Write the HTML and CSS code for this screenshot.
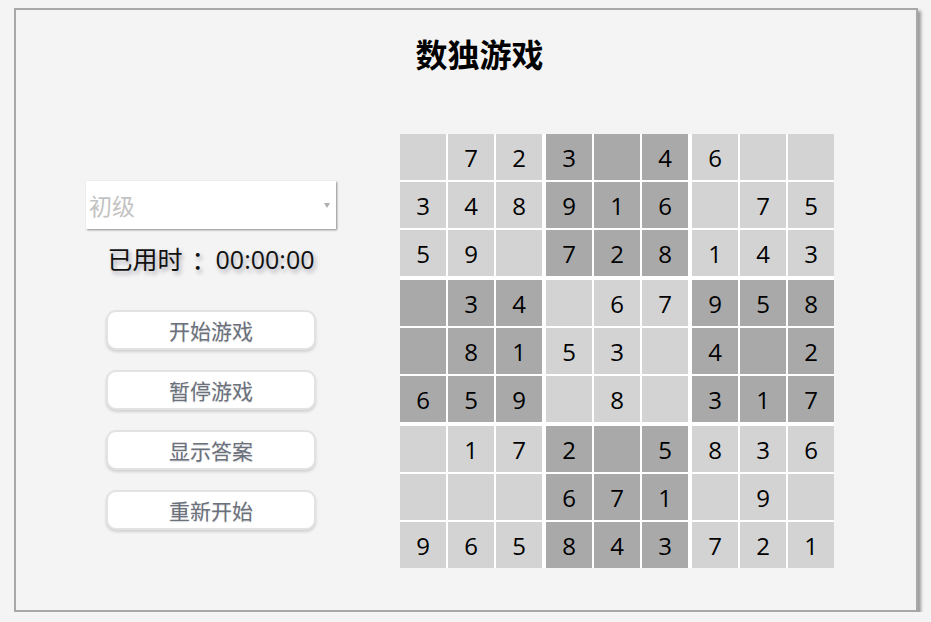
FILE: index.html
```html
<!DOCTYPE html>
<html lang="zh">
<head>
<meta charset="utf-8">
<title>数独游戏</title>
<link rel="stylesheet" href="styles.css">
</head>
<body>
<div class="frame">
  <h1 class="title">数独游戏</h1>
  <div class="main">
    <div class="panel">
      <div class="select"><span class="select-text">初级</span><span class="select-arrow"></span></div>
      <div class="timer">已用时<span class="colon">：</span>00:00:00</div>
      <button class="btn">开始游戏</button>
      <button class="btn">暂停游戏</button>
      <button class="btn">显示答案</button>
      <button class="btn">重新开始</button>
    </div>
    <div class="board">
      <div class="block light"><div class="cell"></div><div class="cell">7</div><div class="cell">2</div><div class="cell">3</div><div class="cell">4</div><div class="cell">8</div><div class="cell">5</div><div class="cell">9</div><div class="cell"></div></div>
      <div class="block dark"><div class="cell">3</div><div class="cell"></div><div class="cell">4</div><div class="cell">9</div><div class="cell">1</div><div class="cell">6</div><div class="cell">7</div><div class="cell">2</div><div class="cell">8</div></div>
      <div class="block light"><div class="cell">6</div><div class="cell"></div><div class="cell"></div><div class="cell"></div><div class="cell">7</div><div class="cell">5</div><div class="cell">1</div><div class="cell">4</div><div class="cell">3</div></div>
      <div class="block dark"><div class="cell"></div><div class="cell">3</div><div class="cell">4</div><div class="cell"></div><div class="cell">8</div><div class="cell">1</div><div class="cell">6</div><div class="cell">5</div><div class="cell">9</div></div>
      <div class="block light"><div class="cell"></div><div class="cell">6</div><div class="cell">7</div><div class="cell">5</div><div class="cell">3</div><div class="cell"></div><div class="cell"></div><div class="cell">8</div><div class="cell"></div></div>
      <div class="block dark"><div class="cell">9</div><div class="cell">5</div><div class="cell">8</div><div class="cell">4</div><div class="cell"></div><div class="cell">2</div><div class="cell">3</div><div class="cell">1</div><div class="cell">7</div></div>
      <div class="block light"><div class="cell"></div><div class="cell">1</div><div class="cell">7</div><div class="cell"></div><div class="cell"></div><div class="cell"></div><div class="cell">9</div><div class="cell">6</div><div class="cell">5</div></div>
      <div class="block dark"><div class="cell">2</div><div class="cell"></div><div class="cell">5</div><div class="cell">6</div><div class="cell">7</div><div class="cell">1</div><div class="cell">8</div><div class="cell">4</div><div class="cell">3</div></div>
      <div class="block light"><div class="cell">8</div><div class="cell">3</div><div class="cell">6</div><div class="cell"></div><div class="cell">9</div><div class="cell"></div><div class="cell">7</div><div class="cell">2</div><div class="cell">1</div></div>
    </div>
  </div>
</div>
</body>
</html>
```
FILE: styles.css
```css
html, body {
  margin: 0;
  background: #f4f4f4;
}
body {
  padding: 8px 0 0 14px;
  font-family: "Open Sans", "Noto Sans CJK SC", sans-serif;
}
.frame {
  box-sizing: border-box;
  width: 904px;
  height: 604px;
  border: 2px solid #a8a8a8;
  box-shadow: 3px 3px 3px #9a9a9a;
  background: #f4f4f4;
}
.title {
  margin: 0;
  padding: 23px 0 0 27px;
  height: 40px;
  line-height: 40px;
  text-align: center;
  font-family: "Noto Sans CJK SC", sans-serif;
  font-size: 32px;
  font-weight: 700;
  color: #000;
}
.main {
  display: flex;
  align-items: flex-start;
  margin-top: 61px;
  padding-left: 70px;
  gap: 64px;
}
.panel {
  width: 250px;
  margin-top: 47px;
  display: flex;
  flex-direction: column;
  align-items: center;
}
.select {
  box-sizing: border-box;
  width: 250px;
  height: 48px;
  background: #fff;
  box-shadow: 1px 1px 2px #8a8a8a;
  display: flex;
  align-items: center;
  justify-content: space-between;
  padding: 0 6px 0 3px;
}
.select-text {
  font-family: "Noto Sans CJK SC", sans-serif;
  font-size: 23px;
  color: #c3c3c3;
}
.select-arrow {
  width: 0;
  height: 0;
  border-left: 3px solid transparent;
  border-right: 3px solid transparent;
  border-top: 5px solid #b0b0b0;
}
.timer {
  margin-top: 13px;
  height: 34px;
  line-height: 34px;
  font-size: 25px;
  color: #111;
  text-shadow: 2px 3px 4px rgba(30, 30, 60, 0.35);
  white-space: nowrap;
}
.colon {
  margin-left: 9px;
  margin-right: -1px;
}
.btn {
  box-sizing: border-box;
  width: 210px;
  height: 40px;
  margin-top: 20px;
  background: #fff;
  border: 2px solid #e2e2e2;
  border-radius: 10px;
  box-shadow: 0 2px 3px #d0d0d0;
  font-family: "Noto Sans CJK SC", sans-serif;
  font-size: 21px;
  color: #6a707c;
  text-shadow: 0 1px 1px #d8d8d8;
  padding: 0;
  line-height: 36px;
}
.btn:first-of-type {
  margin-top: 34px;
}
.board {
  display: grid;
  grid-template-columns: repeat(3, 142px);
  grid-template-rows: repeat(3, 142px);
  gap: 4px;
  background: #fff;
}
.block {
  display: grid;
  grid-template-columns: repeat(3, 46px);
  grid-template-rows: repeat(3, 46px);
  gap: 2px;
  background: #fff;
}
.cell {
  display: flex;
  align-items: center;
  justify-content: center;
  font-family: "Open Sans", sans-serif;
  font-size: 24px;
  color: #000;
}
.light .cell { background: #d3d3d3; }
.dark .cell { background: #a9a9a9; }
```
